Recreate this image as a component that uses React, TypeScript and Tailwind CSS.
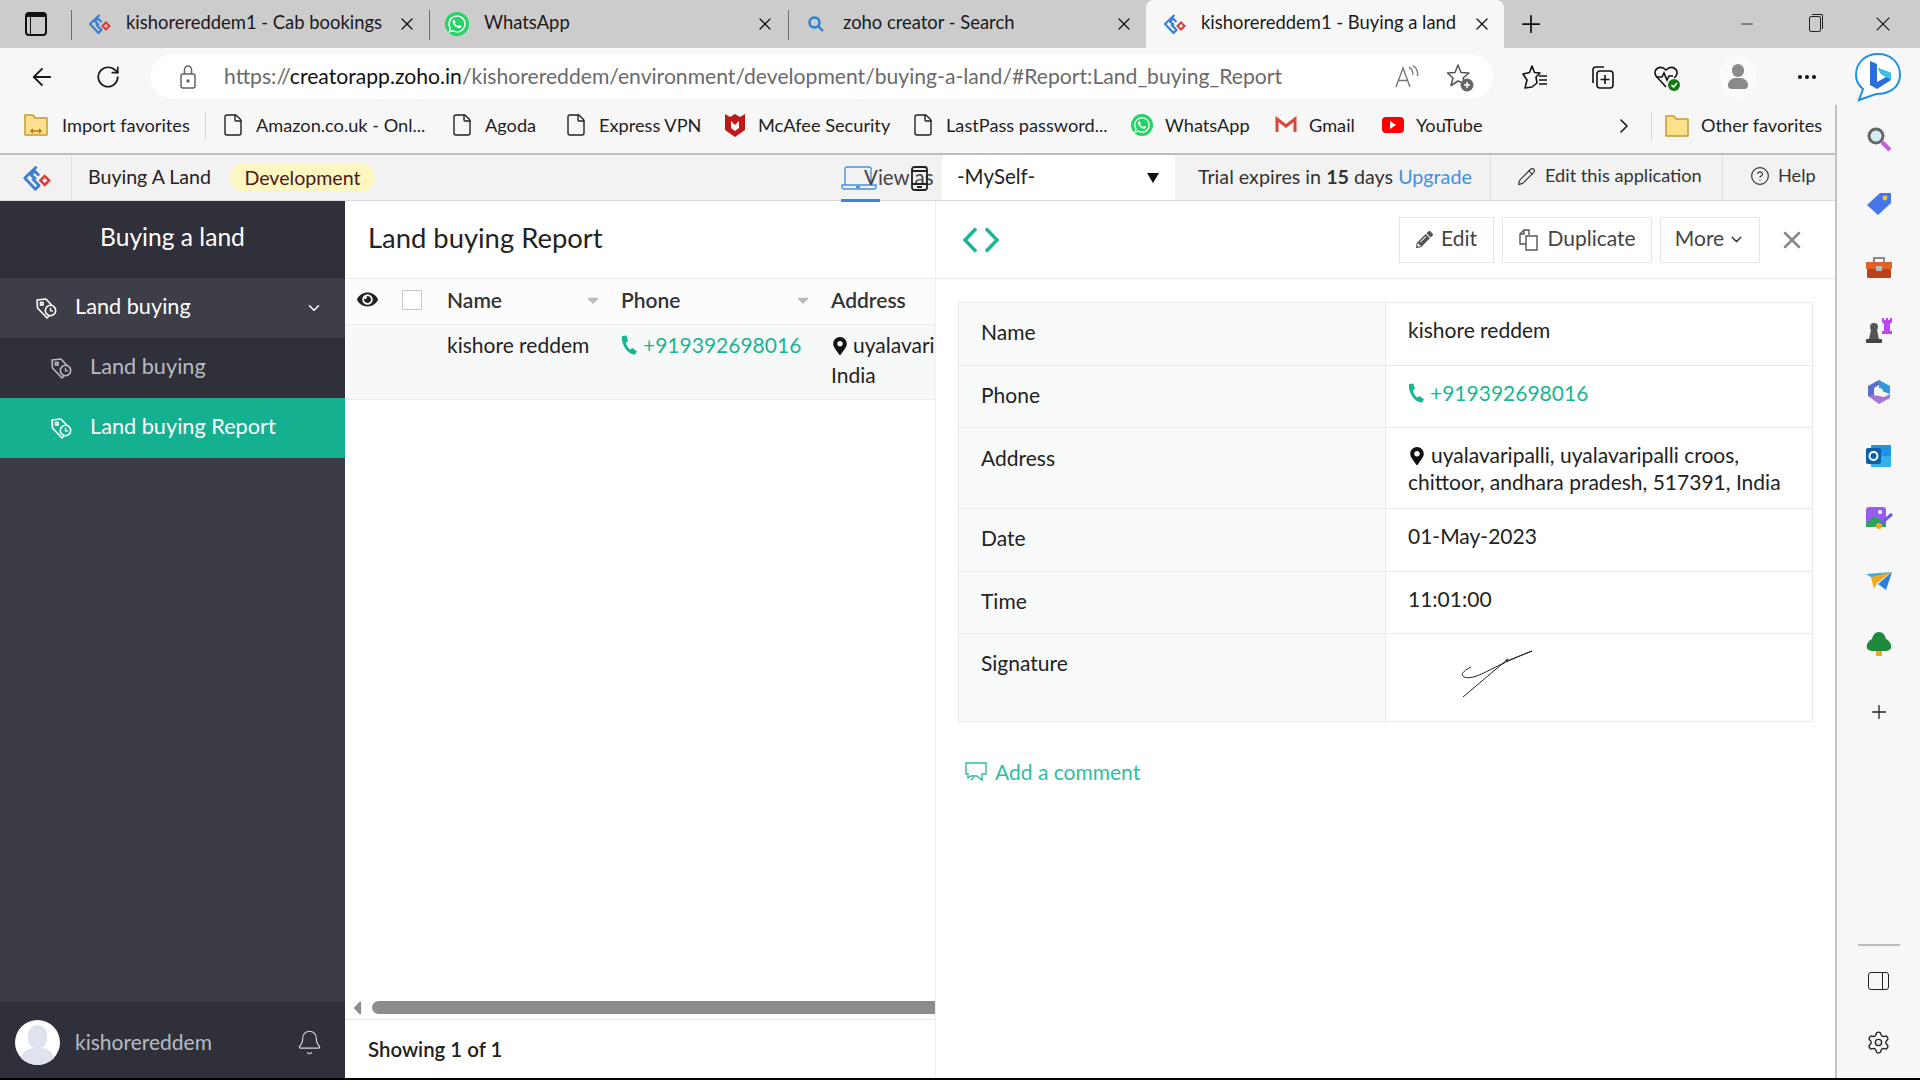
import React from "react";
import { ArrowLeft, RotateCw, File, ChevronRight, ChevronDown, Pencil, CircleHelp, Bell, X, Plus, Minus, Settings, Ellipsis } from "lucide-react";
import { FaEye, FaMapMarkerAlt, FaPencilAlt, FaWhatsapp, FaCaretDown, FaCaretLeft } from "react-icons/fa";

const Logo = ({ s = 24 }: { s?: number }) => (
  <svg width={s} height={s} viewBox="0 0 24 24" fill="none" className="shrink-0">
    <path d="M12 13 L8 9.5 L11 6.5 L14.5 10 M12.5 3 L3 12 L11.5 21 L14.5 18 L9 12.5" stroke="#3a7fd0" strokeWidth="2.2" strokeLinejoin="round" />
    <path d="M19 10.5 L22.5 14 L19 17.5 L15.5 14 Z" stroke="#e0383b" strokeWidth="2" />
  </svg>
);

const WA = ({ s = 24 }: { s?: number }) => (
  <span className="relative shrink-0 flex items-center justify-center rounded-full bg-[#25d366] text-white" style={{ width: s, height: s }}>
    <FaWhatsapp size={s - 4} />
  </span>
);

const TagClock = ({ c }: { c: string }) => (
  <svg width="24" height="24" viewBox="0 0 24 24" fill="none" stroke={c} strokeWidth="1.6" className="shrink-0">
    <path d="M12 3 L3 4 L3.5 12 L13 22 L15 20 M12 3 L18 9.5" strokeLinejoin="round" />
    <rect x="6.5" y="6.5" width="2.5" height="2.5" />
    <circle cx="16.5" cy="14.5" r="5.2" />
    <path d="M16.5 11.8 V14.8 H19" strokeWidth="1.3" />
  </svg>
);

const PhoneIcon = () => (
  <svg width="17" height="20" viewBox="0 0 17 20" className="shrink-0" fill="#19b693">
    <path d="M1 1 L5.5 .5 L7 6 L5 7.5 C5.5 10.5 7 13 9 14.5 L11.5 13 L16 16.5 L14 19.5 C7 19.5 0 10 1 1 Z" />
  </svg>
);

const Tab = ({ icon, label, active, sep }: { icon: React.ReactNode; label: string; active?: boolean; sep?: boolean }) => (
  <div className={active ? "w-[358px] h-[48px] flex items-center bg-[#f7f7f7] rounded-t-lg pl-[19px]" : "w-[358px] h-[48px] flex items-center pl-[19px] relative"}>
    {sep && <span className="absolute left-0 top-[10px] w-px h-[30px] bg-[#6f6f6f]" />}
    <span className="w-[18px] flex justify-center">{icon}</span>
    <span className="ml-[18px] pb-[2px] flex-1 text-[18.4px] text-[#1a1a1a] whitespace-nowrap">{label}</span>
    <X size={20} strokeWidth={1.5} className="mr-[12px] text-[#111]" />
  </div>
);

const BM = ({ w, icon, label, lm = "ml-[11px]" }: { w: string; icon: React.ReactNode; label: string; lm?: string }) => (
  <div className={`${w} flex items-center shrink-0`}>
    <span className="w-[24px] flex justify-center shrink-0">{icon}</span>
    <span className={`${lm} text-[18.2px] text-[#1e1e1e] whitespace-nowrap`}>{label}</span>
  </div>
);

const Doc = () => <File size={26} strokeWidth={1.4} className="text-[#222]" />;

const Folder = ({ arrow }: { arrow?: boolean }) => (
  <svg width="26" height="26" viewBox="0 0 26 26" fill="#fbe08e" stroke="#c99a2e" strokeWidth="1.5" className="shrink-0">
    <path d="M2 3 H10 L12 6 H24 V23 H2 Z" strokeLinejoin="round" />
    {arrow && <path d="M8 19 H18 M10 17 L8 19 L10 21 M16 17 L18 19 L16 21" stroke="#b57b10" fill="none" />}
  </svg>
);

const Row = ({ label, h, children, lp }: { label: string; h: string; children: React.ReactNode; lp: string }) => (
  <div className={`${h} flex border-b border-[#e9ebeb] last:border-b-0`}>
    <div className={`w-[427px] shrink-0 bg-[#f8f9f9] border-r border-[#e9ebeb] pl-[22px] ${lp} text-[21px] leading-[24px] text-[#222]`}>{label}</div>
    <div className="flex-1 pl-[22px] pt-[14px] text-[21px] leading-[25px] text-[#222]">{children}</div>
  </div>
);

const Btn = ({ w, children }: { w: string; children: React.ReactNode }) => (
  <div className={`${w} h-[46px] flex items-center justify-center gap-[8px] border border-[#e6e6e6] pb-[3px] text-[21px] text-[#444]`}>{children}</div>
);

const RailIcon = ({ h, children }: { h: string; children: React.ReactNode }) => (
  <div className={`${h} flex items-center justify-center shrink-0`}>{children}</div>
);

export default function App() {
  return (
    <div className="w-[1920px] h-[1080px] overflow-hidden bg-black font-['Lato','Noto_Sans',sans-serif] flex flex-col">
      {/* tab strip */}
      <div className="h-[48px] bg-[#cccccc] flex items-center shrink-0">
        <div className="w-[71px] flex justify-center">
          <div className="w-[22px] h-[24px] rounded-[4px] border-2 border-[#111] border-t-[5px] flex">
            <span className="w-[4px] h-full border-r border-[#111]" />
          </div>
        </div>
        <Tab sep icon={<Logo s={24} />} label="kishorereddem1 - Cab bookings" />
        <Tab sep icon={<WA />} label="WhatsApp" />
        <div className="w-[1px]" />
        <Tab sep icon={<svg width="18" height="18" viewBox="0 0 18 18" fill="none" stroke="#2a7fd4" strokeWidth="2.4"><circle cx="7.5" cy="7.5" r="5" /><path d="M11.5 11.5 L16 16" /></svg>} label="zoho creator - Search" />
        <Tab active icon={<Logo s={24} />} label="kishorereddem1 - Buying a land" />
        <Plus size={28} strokeWidth={1.5} className="ml-[13px] text-[#111]" />
        <div className="ml-[193px] flex items-center">
          <Minus size={18} strokeWidth={1.2} className="text-[#222]" />
          <div className="relative ml-[53px] w-[12px] h-[16px] border border-[#222] rounded-[2px]">
            <span className="absolute -top-[3px] left-[2px] w-[11px] h-[15px] border-t border-r border-[#222] rounded-tr-[2px]" />
          </div>
          <X size={24} strokeWidth={1.1} className="ml-[50px] text-[#222]" />
        </div>
      </div>

      {/* toolbar */}
      <div className="h-[57px] bg-[#f7f7f7] flex items-center shrink-0">
        <ArrowLeft size={28} strokeWidth={1.6} className="ml-[28px] text-[#1a1a1a]" />
        <RotateCw size={26} strokeWidth={1.6} className="ml-[39px] text-[#1a1a1a]" />
        <div className="ml-[29px] w-[1343px] h-[45px] bg-white rounded-full flex items-center">
          <svg width="20" height="26" viewBox="0 0 20 26" fill="none" stroke="#666" strokeWidth="1.5" className="ml-[28px]">
            <rect x="3" y="10" width="14" height="14" rx="2" /><path d="M6.5 10 V5.5 a3.5 3.5 0 0 1 7 0 V10" /><circle cx="10" cy="17" r="1" fill="#666" />
          </svg>
          <span className="ml-[26px] text-[21.15px] text-[#6a6a6a] whitespace-nowrap">https://<span className="text-[#111]">creatorapp.zoho.in</span>/kishorereddem/environment/development/buying-a-land/#Report:Land_buying_Report</span>
          <span className="ml-auto flex items-center">
            <svg width="28" height="26" viewBox="0 0 28 26" fill="none" stroke="#777" strokeWidth="1.4"><path d="M3 23 L10 4 L17 23 M5.5 16.5 H14.5" /><path d="M16 3 C19 5 20 8 20 11 M20 1.5 C24 4 25 8 24.5 12" /></svg>
            <svg width="30" height="30" viewBox="0 0 30 30" fill="none" stroke="#555" strokeWidth="1.5" className="ml-[24px] mr-[18px]"><path d="M13 3 L16 10.5 L24 11 L18 16 L20 22 L13 19 L6 23.5 L8 16 L2.5 11 L10 10.5 Z" strokeLinejoin="round" /><circle cx="22" cy="23" r="6.5" fill="#666" stroke="none" /><path d="M22 20 V26 M19 23 H25" stroke="#fff" /></svg>
          </span>
        </div>
        <svg width="28" height="28" viewBox="0 0 28 28" fill="none" stroke="#111" strokeWidth="1.6" className="ml-[28px]"><path d="M11 3 L13.5 9.5 L19 10 L15 14 L16 20 L11 24 L4 25 L6 17 L2 11 L8.5 9.5 Z" strokeLinejoin="round" /><path d="M18 13 H26 M18 17 H26 M18 21 H26" /></svg>
        <svg width="28" height="28" viewBox="0 0 28 28" fill="none" stroke="#111" strokeWidth="1.6" className="ml-[39px]"><path d="M5 20 V7 a3 3 0 0 1 3 -3 H16" /><rect x="9" y="8" width="16" height="17" rx="3" /><path d="M17 12 V21 M12.5 16.5 H21.5" /></svg>
        <svg width="30" height="30" viewBox="0 0 30 30" fill="none" stroke="#111" strokeWidth="1.6" className="ml-[36px]"><path d="M14 25 L4 14 C0 8 8 2 14 8 C20 2 28 8 24 14 L22 16" /><path d="M4 15 H10 L12 11 L15 18 L17 14 H21" /><circle cx="22" cy="23" r="6" fill="#107c10" stroke="none" /><path d="M19.5 23 L21.5 25 L25 21" stroke="#fff" /></svg>
        <div className="ml-[38px] w-[36px] h-[42px] rounded-full flex flex-col items-center justify-center bg-[#fbfbfb]">
          <span className="w-[12px] h-[13px] rounded-full bg-[#8a8a8a]" />
          <span className="mt-[1px] w-[20px] h-[11px] rounded-t-[8px] rounded-b-[4px] bg-[#8a8a8a]" />
        </div>
        <Ellipsis size={24} strokeWidth={2} className="ml-[39px] text-[#111]" />
        <svg width="48" height="52" viewBox="0 0 48 52" fill="none" className="ml-[35px]">
          <path d="M24 3 C36 3 46 11 46 24 C46 36 36 43 22 43 L5 49 L9 38 C4 34 2 29 2 24 C2 11 12 3 24 3 Z" fill="#fff" stroke="#1e90e6" strokeWidth="2" />
          <path d="M16 10 L23 13 V31 L32 26 L27 23 L24 17 L37 22 V29 L23 38 L16 34 Z" fill="#2a6fdb" />
          <path d="M24 17 L37 22 V29 L32 26 L27 23 Z" fill="#35c1e8" />
        </svg>
      </div>

      <div className="flex-1 flex min-h-0">
        {/* page */}
        <div className="w-[1835px] shrink-0 flex flex-col min-h-0">
          {/* bookmarks */}
          <div className="h-[48px] bg-[#f7f7f7] flex items-center pl-[24px] pb-[7px] shrink-0">
            <BM w="w-[181px]" lm="ml-[14px]" icon={<Folder arrow />} label="Import favorites" />
            <span className="w-px h-[28px] bg-[#d5d5d5] shrink-0" />
            <span className="w-[15px] shrink-0" />
            <BM w="w-[229px]" icon={<Doc />} label="Amazon.co.uk - Onl..." />
            <BM w="w-[114px]" icon={<Doc />} label="Agoda" />
            <BM w="w-[159px]" icon={<Doc />} label="Express VPN" />
            <BM w="w-[188px]" icon={<svg width="22" height="26" viewBox="0 0 22 26" fill="#c01818"><path d="M1 2 L6 5 L11 2 L16 5 L21 2 V18 L11 25 L1 18 Z" /><path d="M7 9 L11 13 L15 9 V16 L11 19 L7 16 Z" fill="#f7f7f7" /></svg>} label="McAfee Security" />
            <BM w="w-[219px]" icon={<Doc />} label="LastPass password..." />
            <BM w="w-[144px]" icon={<WA s={22} />} label="WhatsApp" />
            <BM w="w-[107px]" icon={<svg width="22" height="18" viewBox="0 0 22 18" fill="none"><path d="M2 16 V3 L11 10 L20 3 V16" stroke="#d8483a" strokeWidth="3" /></svg>} label="Gmail" />
            <BM w="w-[231px]" icon={<span className="w-[22px] h-[16px] rounded-[4px] bg-[#f00] flex items-center justify-center"><span className="w-0 h-0 border-y-[4px] border-y-transparent border-l-[6px] border-l-white" /></span>} label="YouTube" />
            <ChevronRight size={24} strokeWidth={1.5} className="text-[#111] shrink-0" />
            <span className="ml-[15px] w-px h-[28px] bg-[#d5d5d5] shrink-0" />
            <span className="ml-[12px] shrink-0"><Folder /></span>
            <span className="ml-[11px] text-[18.2px] text-[#1e1e1e] whitespace-nowrap">Other favorites</span>
          </div>
          <div className="h-[2px] bg-[#bdbdbd] shrink-0" />

          {/* app header */}
          <div className="h-[45px] bg-[#f2f2f2] flex items-center shrink-0 border-b border-[#d8d8d8] box-content">
            <div className="w-[72px] h-full flex items-center justify-center border-r border-[#dcdfe6]"><Logo s={30} /></div>
            <span className="ml-[16px] pb-[2px] text-[19.6px] text-[#2a2020] whitespace-nowrap">Buying A Land</span>
            <span className="ml-[19px] h-[29px] w-[145px] rounded-full bg-[#fdf6c0] flex items-center justify-center text-[19.6px] text-[#4a1a1a]">Development</span>
            <div className="relative ml-[466px] w-[101px] h-full flex items-center shrink-0">
              <svg width="36" height="24" viewBox="0 0 36 24" fill="none" stroke="#4a90e2" strokeWidth="1.4" className="absolute left-0 top-[11px]">
                <path d="M4 19 V3 a2 2 0 0 1 2 -2 H28 a2 2 0 0 1 2 2 V19" />
                <path d="M1 19 H35 V21 a2 2 0 0 1 -2 2 H3 a2 2 0 0 1 -2 -2 Z" />
                <path d="M15 21 H19" strokeWidth="2" />
              </svg>
              <span className="absolute left-[23px] top-[7px] text-[20.5px] text-[#444] whitespace-nowrap">View as</span>
              <svg width="17" height="25" viewBox="0 0 17 25" fill="none" stroke="#222" strokeWidth="1.8" className="absolute left-[70px] top-[11px]">
                <rect x="1" y="1" width="15" height="23" rx="2.5" />
                <path d="M1 5 H16 M1 18 H16 M6 21 H11" />
              </svg>
              <span className="absolute left-0 top-[44px] w-[39px] h-[3px] bg-[#3b86d6]" />
            </div>
            <div className="w-[233px] h-full bg-white flex items-center pl-[15px] pb-[2px] text-[20.5px] text-[#222] shrink-0">
              -MySelf-
              <span className="ml-auto mr-[16px] mt-[2px] w-0 h-0 border-x-[6px] border-x-transparent border-t-[10px] border-t-[#111]" />
            </div>
            <div className="w-[316px] h-full flex items-center pl-[23px] pb-[2px] border-r border-[#dcdfe6] text-[19.7px] text-[#333] whitespace-nowrap shrink-0">
              Trial expires in&nbsp;<b className="font-bold text-[#333]">15</b>&nbsp;days&nbsp;<span className="text-[#3f8fe0]">Upgrade</span>
            </div>
            <div className="w-[232px] h-full flex items-center pl-[26px] pb-[3px] gap-[9px] border-r border-[#dcdfe6] text-[18.2px] text-[#333] whitespace-nowrap shrink-0">
              <Pencil size={19} strokeWidth={1.4} /> Edit this application
            </div>
            <div className="flex-1 h-full flex items-center pl-[27px] pb-[3px] gap-[8px] text-[18.2px] text-[#333]">
              <CircleHelp size={20} strokeWidth={1.4} /> Help
            </div>
          </div>

          {/* main */}
          <div className="flex-1 flex min-h-0 bg-white">
            {/* sidebar */}
            <div className="w-[345px] shrink-0 bg-[#3b3c46] flex flex-col">
              <div className="h-[77px] bg-[#2f3039] flex items-center justify-center pb-[4px] text-[24.6px] text-white">Buying a land</div>
              <div className="h-[60px] bg-[#3d3e48] flex items-center pl-[34px] pr-[22px] text-[21.7px] text-white">
                <TagClock c="#fff" />
                <span className="ml-[17px] pb-[3px]">Land buying</span>
                <ChevronDown size={18} className="ml-auto" />
              </div>
              <div className="h-[60px] bg-[#2f3039] flex items-center pl-[49px] text-[21.7px] text-[#b9bac0]">
                <TagClock c="#b9bac0" />
                <span className="ml-[17px] pb-[3px]">Land buying</span>
              </div>
              <div className="h-[60px] bg-[#15b08f] flex items-center pl-[49px] text-[21.7px] text-white">
                <TagClock c="#fff" />
                <span className="ml-[17px] pb-[3px]">Land buying Report</span>
              </div>
              <div className="mt-auto h-[76px] bg-[#2f3039] flex items-center pl-[15px] pr-[22px] pt-[4px]">
                <div className="relative w-[45px] h-[45px] rounded-full bg-white overflow-hidden shrink-0">
                  <span className="absolute left-[13px] top-[5px] w-[19px] h-[24px] rounded-full bg-[#dfe3ee]" />
                  <span className="absolute left-[5px] top-[28px] w-[35px] h-[22px] rounded-t-[14px] bg-[#dfe3ee]" />
                </div>
                <span className="ml-[15px] text-[21px] text-[#b9bac0]">kishorereddem</span>
                <Bell size={27} strokeWidth={1} className="ml-auto text-[#d8d8d8]" />
              </div>
            </div>

            {/* report */}
            <div className="w-[590px] shrink-0 flex flex-col min-w-0 overflow-hidden">
              <div className="h-[77px] flex items-center pl-[23px] pb-[3px] text-[27.4px] text-[#222] shrink-0">Land buying Report</div>
              <div className="h-[47px] bg-[#fcfcfc] border-y border-[#ececec] flex items-center text-[21px] font-semibold text-[#333] shrink-0 pb-[4px]">
                <span className="ml-[12px] w-[22px] shrink-0"><FaEye size={21} className="text-[#222]" /></span>
                <span className="ml-[23px] w-[20px] h-[20px] bg-white border border-[#c8c8c8] shrink-0" />
                <span className="ml-[25px] w-[174px] flex items-center shrink-0">Name<FaCaretDown size={18} className="ml-auto mr-[19px] text-[#bbb]" /></span>
                <span className="w-[210px] flex items-center shrink-0">Phone<FaCaretDown size={18} className="ml-auto mr-[19px] text-[#bbb]" /></span>
                <span className="shrink-0">Address</span>
              </div>
              <div className="h-[75px] bg-[#f7f9f9] border-b border-[#ececec] flex text-[21px] leading-[30px] text-[#222] shrink-0 pt-[5px] overflow-hidden">
                <span className="ml-[102px] w-[174px] whitespace-nowrap shrink-0">kishore reddem</span>
                <span className="w-[210px] flex items-center h-[30px] gap-[5px] text-[#19b693] shrink-0"><PhoneIcon />+919392698016</span>
                <span className="whitespace-nowrap shrink-0"><FaMapMarkerAlt size={18} className="inline mb-[4px] mr-[4px] text-[#111]" />uyalavaripalli<br />India</span>
              </div>
              <div className="flex-1" />
              <div className="h-[18px] flex items-start shrink-0">
                <FaCaretLeft size={22} className="ml-[1px] -mt-[4px] text-[#8c8c8c] shrink-0" />
                <div className="ml-[4px] flex-1 h-[13px] rounded-l-full bg-[#8c8c8c]" />
              </div>
              <div className="h-[59px] border-t border-[#ececec] flex items-center pl-[23px] text-[20.4px] font-semibold text-[#222] shrink-0">Showing 1 of 1</div>
            </div>

            {/* detail */}
            <div className="flex-1 flex flex-col min-w-0 border-l border-[#efefef]">
              <div className="h-[78px] border-b border-[#eaeaea] flex items-center pl-[26px] shrink-0">
                <svg width="38" height="26" viewBox="0 0 38 26" fill="none" stroke="#19b693" strokeWidth="3.4"><path d="M14 1.5 L3 13 L14 24.5" /><path d="M24 1.5 L35 13 L24 24.5" /></svg>
                <div className="ml-auto flex items-center gap-[8px] mr-[18px]">
                  <Btn w="w-[95px]"><FaPencilAlt size={17} className="text-[#555] mt-[3px]" />Edit</Btn>
                  <Btn w="w-[150px]">
                    <svg width="21" height="22" viewBox="0 0 21 22" fill="none" stroke="#555" strokeWidth="1.4" className="mt-[3px]"><path d="M8 15 H2 V5 L6 1 H11 V6" /><path d="M6 1 V5 H2" /><path d="M8 7 H19 V21 H8 Z" /></svg>
                    Duplicate
                  </Btn>
                  <Btn w="w-[100px]"><span className="flex items-center gap-[4px]">More<ChevronDown size={17} className="mt-[3px]" /></span></Btn>
                </div>
                <X size={28} strokeWidth={2.2} className="mr-[29px] text-[#8a8a8a]" />
              </div>
              <div className="pt-[23px] pl-[22px] pr-[22px]">
                <div className="border border-[#e9ebeb]">
                  <Row h="h-[63px]" lp="pt-[17px]" label="Name">kishore reddem</Row>
                  <Row h="h-[62px]" lp="pt-[17px]" label="Phone"><span className="flex items-center gap-[5px] text-[#19b693]"><PhoneIcon />+919392698016</span></Row>
                  <Row h="h-[81px]" lp="pt-[18px]" label="Address"><FaMapMarkerAlt size={18} className="inline mb-[4px] mr-[5px] text-[#111]" />uyalavaripalli, uyalavaripalli croos,<br />chittoor, andhara pradesh, 517391, India</Row>
                  <Row h="h-[63px]" lp="pt-[17px]" label="Date">01-May-2023</Row>
                  <Row h="h-[62px]" lp="pt-[17px]" label="Time">11:01:00</Row>
                  <Row h="h-[87px]" lp="pt-[17px]" label="Signature">
                    <svg width="74" height="48" viewBox="0 0 74 48" fill="none" stroke="#222" strokeWidth="1" className="ml-[52px] mt-[2px]">
                      <path d="M11 17 C3 21 0 25 4 27 C16 31 30 17 72 1 C55 8 40 14 48 9 L3 47" />
                    </svg>
                  </Row>
                </div>
                <div className="mt-[34px] ml-[7px] flex items-center gap-[8px] text-[21px] text-[#2cbfa0]">
                  <svg width="22" height="20" viewBox="0 0 22 20" fill="none" stroke="#2cbfa0" strokeWidth="1.4"><path d="M1 1 H21 V12 H17 V18 L12 14 H6 L3 16 V12 H1 Z" /><path d="M6 18 L9 15" /></svg>
                  Add a comment
                </div>
              </div>
            </div>
          </div>
        </div>

        {/* rail */}
        <div className="flex-1 bg-[#f7f7f7] border-l-2 border-[#c2c2c2] flex flex-col items-center">
          <RailIcon h="h-[68px]">
            <svg width="26" height="26" viewBox="0 0 26 26" fill="none"><circle cx="10" cy="10" r="7" fill="#d4ecf7" stroke="#666" strokeWidth="3" /><path d="M16 16 L24 24" stroke="#c95be0" strokeWidth="4" /></svg>
          </RailIcon>
          <RailIcon h="h-[62px]">
            <svg width="26" height="24" viewBox="0 0 26 24"><path d="M1 13 L14 1 H25 V11 L12 23 Z" fill="#4876ea" /><circle cx="19" cy="6" r="2.4" fill="#f5c518" /></svg>
          </RailIcon>
          <RailIcon h="h-[64px]">
            <svg width="28" height="22" viewBox="0 0 28 22"><path d="M9 6 V2 H19 V6" fill="none" stroke="#8a8a8a" strokeWidth="2" /><rect x="1" y="6" width="26" height="7" fill="#e0622a" /><rect x="2" y="13" width="24" height="9" rx="1" fill="#b8431c" /><rect x="11" y="10" width="6" height="5" fill="#bbb" /></svg>
          </RailIcon>
          <RailIcon h="h-[61px]">
            <svg width="28" height="26" viewBox="0 0 28 26"><path d="M17 1 H19 V3 H21 V1 H23 V3 H25 V1 H27 V5 L25 7 V14 H27 V17 H17 V14 H19 V7 L17 5 Z" fill="#c044f0" /><circle cx="9" cy="10" r="4" fill="#555" /><path d="M6 13 H12 L14 22 H4 Z" fill="#555" /><rect x="1" y="22" width="16" height="4" rx="1" fill="#444" /></svg>
          </RailIcon>
          <RailIcon h="h-[64px]">
            <svg width="24" height="26" viewBox="0 0 24 26" fill="none"><path d="M12 1 L23 7 V15 L12 11 Z" fill="#2d9bd9" /><path d="M1 7 L12 1 L12 6 L7 9 V19 L1 17 Z" fill="#5b6fd1" /><path d="M1 17 L12 25 L23 19 V15 L17 18 L7 16 Z" fill="#a877d6" /><circle cx="12" cy="13" r="4" fill="#f7f7f7" /></svg>
          </RailIcon>
          <RailIcon h="h-[63px]">
            <svg width="26" height="24" viewBox="0 0 26 24"><rect x="5" y="1" width="20" height="22" rx="1" fill="#1f93dd" /><path d="M5 12 L25 12 V23 H5 Z" fill="#35b0ea" /><rect x="0" y="4" width="15" height="16" rx="2" fill="#0f5fa8" /><circle cx="7.5" cy="12" r="4" fill="none" stroke="#fff" strokeWidth="2" /></svg>
          </RailIcon>
          <RailIcon h="h-[63px]">
            <svg width="30" height="26" viewBox="0 0 30 26"><rect x="2" y="1" width="20" height="20" rx="3" fill="#9a5cf0" /><path d="M2 17 L10 10 L22 17 V21 H2 Z" fill="#2da360" /><circle cx="16" cy="6" r="2" fill="#fff" /><path d="M14 20 L28 8" stroke="#6a5cf0" strokeWidth="3" /><circle cx="15" cy="20" r="3" fill="#f2a81d" /></svg>
          </RailIcon>
          <RailIcon h="h-[61px]">
            <svg width="28" height="20" viewBox="0 0 28 20"><path d="M1 3 L27 1 L9 8 Z" fill="#35b0ea" /><path d="M27 1 L21 19 L13 13 Z" fill="#2a7fe0" /><path d="M6 6 L27 1 L12 12 L9 18 Z" fill="#f2a81d" /></svg>
          </RailIcon>
          <RailIcon h="h-[66px]">
            <svg width="26" height="26" viewBox="0 0 26 26"><path d="M13 1 C17 1 19 4 20 8 C24 10 26 14 25 17 C24 20 20 20 18 20 H8 C5 20 2 20 1 17 C0 14 2 10 6 8 C7 4 9 1 13 1 Z" fill="#1f8a3c" /><rect x="10" y="20" width="6" height="5" fill="#f2a81d" /></svg>
          </RailIcon>
          <RailIcon h="h-[70px]"><Plus size={22} strokeWidth={1.4} className="text-[#222]" /></RailIcon>
          <div className="flex-1" />
          <div className="w-[42px] h-[2px] bg-[#bdbdbd]" />
          <RailIcon h="h-[70px]">
            <div className="w-[21px] h-[18px] rounded-[3px] border-[1.5px] border-[#222] flex justify-end"><span className="w-[6px] h-full border-l-[1.5px] border-[#222]" /></div>
          </RailIcon>
          <RailIcon h="h-[52px]"><Settings size={25} strokeWidth={1.3} className="text-[#222]" /></RailIcon>
          <div className="h-[10px]" />
        </div>
      </div>
      <div className="h-[2px] bg-black shrink-0" />
    </div>
  );
}
